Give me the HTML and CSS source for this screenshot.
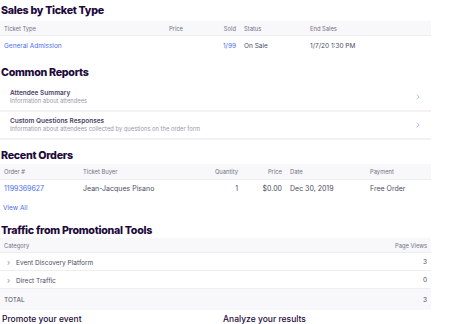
FILE: index.html
```html
<!DOCTYPE html>
<html lang="en">
<head>
    <meta charset="UTF-8">
    <meta name="viewport" content="width=device-width, initial-scale=1.0">
    <title>Event Dashboard</title>
    <link rel="stylesheet" href="styles.css">
</head>
<body>
    <div class="dashboard">
        <h2 class="section-title first">Sales by Ticket Type</h2>
        <table class="data-table sales-table">
            <colgroup>
                <col style="width: 150px">
                <col style="width: 37px">
                <col style="width: 53px">
                <col style="width: 66px">
                <col>
            </colgroup>
            <thead>
                <tr>
                    <th>Ticket Type</th>
                    <th class="num">Price</th>
                    <th class="num">Sold</th>
                    <th>Status</th>
                    <th>End Sales</th>
                </tr>
            </thead>
            <tbody>
                <tr>
                    <td><a href="#" class="link">General Admission</a></td>
                    <td class="num"></td>
                    <td class="num"><a href="#" class="link">1/99</a></td>
                    <td>On Sale</td>
                    <td>1/7/20 1:30 PM</td>
                </tr>
            </tbody>
        </table>

        <h2 class="section-title">Common Reports</h2>
        <ul class="report-list">
            <li class="report-item">
                <div>
                    <div class="report-name">Attendee Summary</div>
                    <div class="report-desc">Information about attendees</div>
                </div>
                <svg class="report-arrow" width="4" height="6" viewBox="0 0 4 6"><path d="M0.8 0.6 L3.2 3 L0.8 5.4" fill="none" stroke="#a9b6ff" stroke-width="1"/></svg>
            </li>
            <li class="report-item">
                <div>
                    <div class="report-name">Custom Questions Responses</div>
                    <div class="report-desc">Information about attendees collected by questions on the order form</div>
                </div>
                <svg class="report-arrow" width="4" height="6" viewBox="0 0 4 6"><path d="M0.8 0.6 L3.2 3 L0.8 5.4" fill="none" stroke="#a9b6ff" stroke-width="1"/></svg>
            </li>
        </ul>

        <h2 class="section-title orders-title">Recent Orders</h2>
        <table class="data-table orders-table">
            <colgroup>
                <col style="width: 79px">
                <col style="width: 121px">
                <col style="width: 42px">
                <col style="width: 44px">
                <col style="width: 80px">
                <col>
            </colgroup>
            <thead>
                <tr>
                    <th>Order #</th>
                    <th>Ticket Buyer</th>
                    <th class="num">Quantity</th>
                    <th class="num">Price</th>
                    <th>Date</th>
                    <th>Payment</th>
                </tr>
            </thead>
            <tbody>
                <tr class="order-row">
                    <td><a href="#" class="link big">1199369627</a></td>
                    <td class="big">Jean-Jacques Pisano</td>
                    <td class="num big">1</td>
                    <td class="num big">$0.00</td>
                    <td class="big">Dec 30, 2019</td>
                    <td class="big">Free Order</td>
                </tr>
            </tbody>
        </table>
        <a href="#" class="link view-all">View All</a>

        <h2 class="section-title traffic-title">Traffic from Promotional Tools</h2>
        <table class="data-table traffic-table">
            <thead>
                <tr>
                    <th>Category</th>
                    <th class="num">Page Views</th>
                </tr>
            </thead>
            <tbody>
                <tr class="traffic-row">
                    <td><span class="chev">&#x203A;</span>Event Discovery Platform</td>
                    <td class="num">3</td>
                </tr>
                <tr class="traffic-row">
                    <td><span class="chev">&#x203A;</span>Direct Traffic</td>
                    <td class="num">0</td>
                </tr>
                <tr class="total-row">
                    <td>TOTAL</td>
                    <td class="num">3</td>
                </tr>
            </tbody>
        </table>

        <div class="bottom-cols">
            <h3 class="sub-title">Promote your event</h3>
            <h3 class="sub-title">Analyze your results</h3>
        </div>
    </div>
</body>
</html>
```

FILE: styles.css
```css
body {
    margin: 0;
    font-family: Inter, 'Noto Sans', sans-serif;
    color: #39364f;
    background-color: #fff;
}
.dashboard {
    width: 431px;
}
.section-title {
    margin: 12px 0 4px 1px;
    font-size: 10.7px;
    line-height: 14px;
    font-weight: 800;
    color: #1e0a3c;
    letter-spacing: -0.3px;
}
.section-title.first {
    margin-top: 4px;
    margin-bottom: 3px;
}
.orders-title {
    margin-top: 9px;
    margin-bottom: 1px;
}
.traffic-title {
    margin-top: 12px;
    margin-bottom: 0;
}
.link,
.link:visited {
    color: #4a6cf0;
    text-decoration: none;
}
.data-table {
    width: 100%;
    border-collapse: collapse;
    table-layout: fixed;
    font-size: 6.5px;
}
.data-table th {
    background-color: #f8f7fa;
    color: #6f7287;
    font-weight: 400;
    text-align: left;
    height: 14px;
    padding: 0 4px;
    border-bottom: 1px solid #eeedf2;
    font-size: 5.8px;
    white-space: nowrap;
}
.data-table td {
    padding: 0 4px;
    height: 17px;
    color: #4b4d63;
    white-space: nowrap;
}
.data-table .num {
    text-align: right;
}
.sales-table td {
    padding-top: 1px;
}
.orders-table th {
    height: 15px;
}
.order-row td {
    height: 17px;
}
.big {
    font-size: 7px;
}
.view-all {
    display: block;
    margin: 7px 0 0 3px;
    font-size: 6.5px;
    line-height: 8px;
    width: max-content;
}
.report-list {
    list-style: none;
    margin: 0;
    padding: 0;
}
.report-item {
    display: flex;
    align-items: center;
    justify-content: space-between;
    padding: 5px 11px 6px 10px;
    border-bottom: 2px solid #f3f3f6;
}
.report-name {
    font-size: 6.5px;
    line-height: 8px;
    font-weight: 600;
    color: #4b4266;
}
.report-desc {
    font-size: 5.8px;
    line-height: 7px;
    color: #9a98ab;
}
.report-arrow {
    display: block;
}
.traffic-table td {
    height: 17px;
    border-bottom: 1px solid #eeedf2;
}
.chev {
    display: inline-block;
    width: 9px;
    margin-left: 3px;
    color: #8c8e9e;
    font-size: 8px;
}
.total-row td {
    height: 21px;
    background-color: #f8f7fa;
    border-bottom: none;
}
.bottom-cols {
    display: grid;
    grid-template-columns: 221px 1fr;
    margin-top: 3px;
    padding-left: 2px;
}
.sub-title {
    margin: 0;
    font-size: 8.5px;
    line-height: 12px;
    font-weight: 500;
    color: #1e0a3c;
}
```
